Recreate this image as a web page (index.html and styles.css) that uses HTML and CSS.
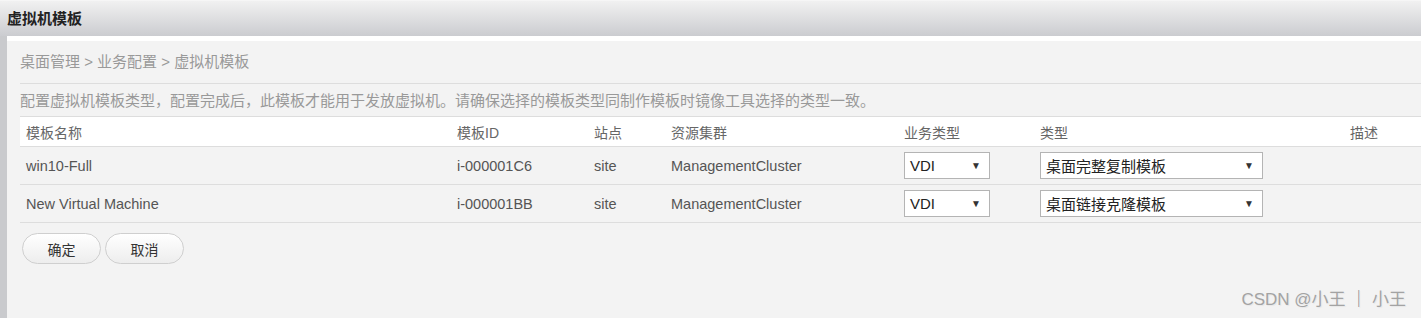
FILE: index.html
```html
<!DOCTYPE html>
<html lang="zh-CN">
<head>
    <meta charset="UTF-8">
    <meta name="viewport" content="width=device-width, initial-scale=1.0">
    <title>虚拟机模板</title>
    <link rel="stylesheet" href="styles.css">
</head>
<body>
    <div class="window">
        <div class="title-bar">虚拟机模板</div>
        <div class="window-body">
            <div class="panel">
                <div class="breadcrumb">桌面管理 &gt; 业务配置 &gt; 虚拟机模板</div>
                <div class="hint">配置虚拟机模板类型，配置完成后，此模板才能用于发放虚拟机。请确保选择的模板类型同制作模板时镜像工具选择的类型一致。</div>

                <table class="template-table">
                    <colgroup>
                        <col style="width: 431px">
                        <col style="width: 137px">
                        <col style="width: 77px">
                        <col style="width: 233px">
                        <col style="width: 136px">
                        <col style="width: 310px">
                        <col>
                    </colgroup>
                    <thead>
                        <tr>
                            <th>模板名称</th>
                            <th>模板ID</th>
                            <th>站点</th>
                            <th>资源集群</th>
                            <th>业务类型</th>
                            <th>类型</th>
                            <th>描述</th>
                        </tr>
                    </thead>
                    <tbody>
                        <tr>
                            <td>win10-Full</td>
                            <td>i-000001C6</td>
                            <td>site</td>
                            <td>ManagementCluster</td>
                            <td><div class="select select-small"><span>VDI</span><span class="arrow">▼</span></div></td>
                            <td><div class="select select-wide"><span>桌面完整复制模板</span><span class="arrow">▼</span></div></td>
                            <td></td>
                        </tr>
                        <tr>
                            <td>New Virtual Machine</td>
                            <td>i-000001BB</td>
                            <td>site</td>
                            <td>ManagementCluster</td>
                            <td><div class="select select-small"><span>VDI</span><span class="arrow">▼</span></div></td>
                            <td><div class="select select-wide"><span>桌面链接克隆模板</span><span class="arrow">▼</span></div></td>
                            <td></td>
                        </tr>
                    </tbody>
                </table>

                <div class="actions">
                    <button type="button" class="btn">确定</button>
                    <button type="button" class="btn">取消</button>
                </div>
            </div>
        </div>
        <div class="watermark">CSDN @小王 <span class="bar">｜</span> 小王</div>
    </div>
</body>
</html>
```

FILE: styles.css
```css
body {
    margin: 0;
    padding: 0;
    font-family: "Liberation Sans", "Noto Sans CJK SC", sans-serif;
    background-color: #fff;
}
.window {
    position: relative;
    height: 318px;
    background-color: #c9cacd;
    overflow: hidden;
}
.title-bar {
    height: 36px;
    line-height: 36px;
    padding-left: 7px;
    font-size: 15px;
    font-weight: bold;
    color: #222;
    background: linear-gradient(#f1f1f1, #cbccd0);
    border-top: 1px solid #f6f6f6;
    box-sizing: border-box;
}
.window-body {
    margin-left: 7px;
    padding-top: 5px;
    background-color: #fff;
    height: 282px;
    box-sizing: border-box;
}
.panel {
    background-color: #f3f3f3;
    height: 100%;
    padding-left: 13px;
}
.breadcrumb {
    height: 42px;
    line-height: 42px;
    font-size: 15px;
    color: #999;
    border-bottom: 1px solid #ddd;
}
.hint {
    padding: 7px 0 5px;
    line-height: 20px;
    font-size: 15px;
    color: #999;
}
.template-table {
    width: 100%;
    table-layout: fixed;
    border-collapse: collapse;
    font-size: 14.5px;
    color: #555;
}
.template-table th {
    height: 29px;
    padding: 0 0 0 6px;
    text-align: left;
    font-size: 14px;
    font-weight: normal;
    color: #666;
    background-color: #fff;
    border-top: 1px solid #ddd;
    border-bottom: 1px solid #ddd;
}
.template-table td {
    height: 37px;
    padding: 0 0 0 6px;
    border-bottom: 1px solid #ddd;
}
.select {
    display: flex;
    align-items: center;
    justify-content: space-between;
    height: 27px;
    padding: 0 8px 0 5px;
    box-sizing: border-box;
    border: 1px solid #b4b4b4;
    background-color: #fff;
    color: #222;
    font-size: 15px;
}
.select-small {
    width: 86px;
}
.select-wide {
    width: 223px;
}
.arrow {
    font-size: 10px;
    color: #333;
}
.actions {
    display: flex;
    gap: 4px;
    margin: 10px 0 0 2px;
}
.btn {
    width: 79px;
    height: 31px;
    border: 1px solid #cfcfcf;
    border-radius: 16px;
    background: linear-gradient(#ffffff, #ededed);
    color: #333;
    font-family: inherit;
    font-size: 14px;
    cursor: pointer;
}
.btn:hover {
    background: linear-gradient(#ffffff, #e2e2e2);
}
.watermark {
    position: absolute;
    right: 15px;
    bottom: 8px;
    font-size: 17px;
    color: #a3a3a3;
    text-shadow: 1px 1px 1px #e6e6e6;
}
.watermark .bar {
    color: #888;
}
```
